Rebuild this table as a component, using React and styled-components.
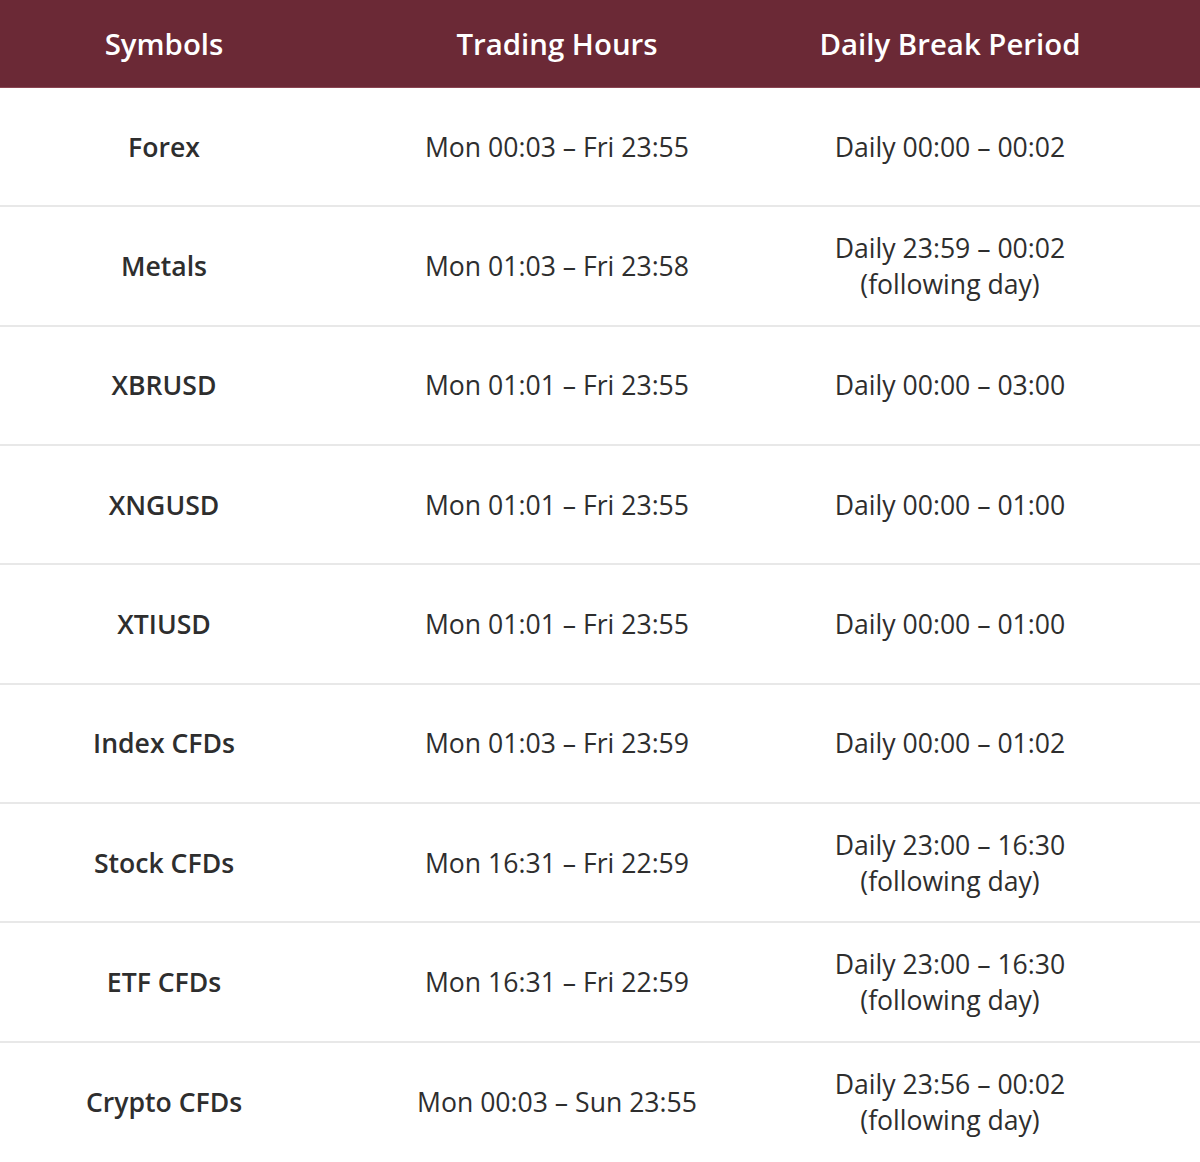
import React from 'react';
import styled, { createGlobalStyle } from 'styled-components';

const GlobalStyle = createGlobalStyle`
  html, body {
    margin: 0;
    padding: 0;
    background: #ffffff;
  }
  body {
    font-family: "Open Sans", "Liberation Sans", sans-serif;
  }
`;

const rows = [
  { symbol: 'Forex', hours: 'Mon 00:03 – Fri 23:55', pause: ['Daily 00:00 – 00:02'] },
  { symbol: 'Metals', hours: 'Mon 01:03 – Fri 23:58', pause: ['Daily 23:59 – 00:02', '(following day)'] },
  { symbol: 'XBRUSD', hours: 'Mon 01:01 – Fri 23:55', pause: ['Daily 00:00 – 03:00'] },
  { symbol: 'XNGUSD', hours: 'Mon 01:01 – Fri 23:55', pause: ['Daily 00:00 – 01:00'] },
  { symbol: 'XTIUSD', hours: 'Mon 01:01 – Fri 23:55', pause: ['Daily 00:00 – 01:00'] },
  { symbol: 'Index CFDs', hours: 'Mon 01:03 – Fri 23:59', pause: ['Daily 00:00 – 01:02'] },
  { symbol: 'Stock CFDs', hours: 'Mon 16:31 – Fri 22:59', pause: ['Daily 23:00 – 16:30', '(following day)'] },
  { symbol: 'ETF CFDs', hours: 'Mon 16:31 – Fri 22:59', pause: ['Daily 23:00 – 16:30', '(following day)'] },
  { symbol: 'Crypto CFDs', hours: 'Mon 00:03 – Sun 23:55', pause: ['Daily 23:56 – 00:02', '(following day)'] },
];

const Table = styled.div`
  width: 1200px;
  display: flex;
  flex-direction: column;
`;

const HeaderRow = styled.div`
  display: grid;
  grid-template-columns: 328px 458px 328px;
  height: 88px;
  align-items: center;
  background: #6b2936;
  border-bottom: 1px solid #8a4552;
  box-sizing: border-box;
`;

const HeadCell = styled.div`
  text-align: center;
  color: #ffffff;
  font-size: 29.4px;
  font-weight: 600;
`;

const Row = styled.div`
  display: grid;
  grid-template-columns: 328px 458px 328px;
  height: 119.33px;
  align-items: center;
  box-sizing: border-box;
  border-bottom: ${(p) => (p.$last ? 'none' : '2px solid #e8e8e8')};
`;

const Cell = styled.div`
  text-align: center;
  color: #2e2e2e;
  font-size: 26.6px;
  line-height: 36px;
  font-weight: ${(p) => (p.$bold ? 600 : 400)};
`;

export default function App() {
  return (
    <>
      <GlobalStyle />
      <Table>
        <HeaderRow>
          <HeadCell>Symbols</HeadCell>
          <HeadCell>Trading Hours</HeadCell>
          <HeadCell>Daily Break Period</HeadCell>
        </HeaderRow>
        {rows.map((r, i) => (
          <Row key={r.symbol} $last={i === rows.length - 1}>
            <Cell $bold>{r.symbol}</Cell>
            <Cell>{r.hours}</Cell>
            <Cell>
              {r.pause.map((line) => (
                <div key={line}>{line}</div>
              ))}
            </Cell>
          </Row>
        ))}
      </Table>
    </>
  );
}
